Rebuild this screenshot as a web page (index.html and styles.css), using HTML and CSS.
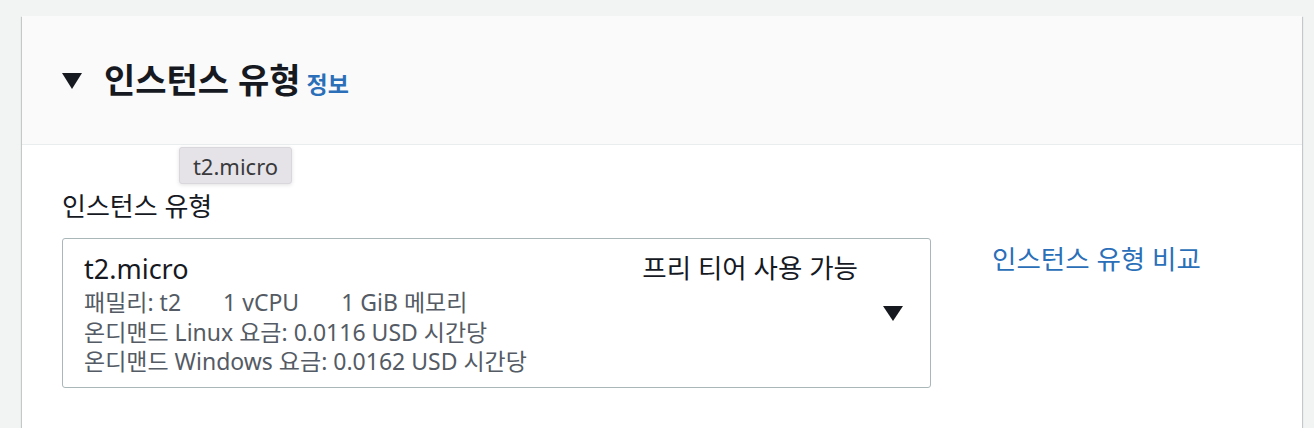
FILE: index.html
```html
<!DOCTYPE html>
<html lang="ko">
<head>
<meta charset="utf-8">
<title>인스턴스 유형</title>
<link rel="stylesheet" href="styles.css">
</head>
<body>
<div class="card">
  <div class="card-header">
    <svg class="caret" width="20" height="16" viewBox="0 0 20 16"><path d="M0 0H20L10 16Z" fill="#16191f"/></svg>
    <h2 class="title">인스턴스 유형</h2>
    <a class="info">정보</a>
  </div>
  <div class="card-body">
    <div class="tooltip">t2.micro</div>
    <div class="label">인스턴스 유형</div>
    <div class="row">
      <div class="select">
        <div class="select-main">
          <div class="opt-title">t2.micro</div>
          <div class="opt-desc">패밀리: t2<span class="sp"></span>1 vCPU<span class="sp"></span>1 GiB 메모리</div>
          <div class="opt-desc">온디맨드 Linux 요금: 0.0116 USD 시간당</div>
          <div class="opt-desc">온디맨드 Windows 요금: 0.0162 USD 시간당</div>
        </div>
        <div class="select-tag">프리 티어 사용 가능</div>
        <svg class="select-caret" width="20" height="15" viewBox="0 0 20 15"><path d="M0 0H20L10 15Z" fill="#16191f"/></svg>
      </div>
      <a class="compare">인스턴스 유형 비교</a>
    </div>
  </div>
</div>
</body>
</html>
```
FILE: styles.css
```css
html, body {
  margin: 0;
  padding: 0;
}
body {
  background: #f2f3f3;
  font-family: "Noto Sans", "Noto Sans CJK KR", sans-serif;
  color: #16191f;
  height: 428px;
  overflow: hidden;
}
.card {
  margin: 16px 0 0 22px;
  width: 1280px;
  height: 412px;
  background: #fff;
  box-shadow: 0 1px 1px 0 rgba(0, 28, 36, 0.3), 1px 1px 1px 0 rgba(0, 28, 36, 0.15), -1px 1px 1px 0 rgba(0, 28, 36, 0.15);
}
.card-header {
  height: 129px;
  box-sizing: border-box;
  background: #fafafa;
  border-bottom: 1px solid #eaeded;
  display: flex;
  align-items: center;
  padding: 0 40px;
}
.caret {
  flex: none;
  margin-right: 22px;
  margin-top: 1px;
}
.title {
  margin: 0;
  font-size: 34px;
  font-weight: 700;
  line-height: 44px;
}
.info {
  margin-left: 6px;
  margin-top: 6px;
  font-size: 23px;
  font-weight: 700;
  color: #2b6fb9;
}
.card-body {
  position: relative;
  padding: 44px 40px 0;
}
.tooltip {
  position: absolute;
  left: 157px;
  top: 2px;
  width: 113px;
  height: 37px;
  box-sizing: border-box;
  background: #e5e3e8;
  border: 1px solid #d9d7dc;
  border-radius: 3px;
  box-shadow: 0 1px 4px rgba(0, 0, 0, 0.12);
  font-size: 22px;
  color: #3a3a3c;
  display: flex;
  align-items: center;
  justify-content: center;
}
.label {
  font-size: 26px;
  line-height: 34px;
}
.row {
  margin-top: 15px;
  display: flex;
  align-items: flex-start;
}
.select {
  width: 869px;
  height: 150px;
  box-sizing: border-box;
  border: 1px solid #aab7b8;
  border-radius: 3px;
  display: flex;
  padding: 11px 27px 0 21px;
}
.select-main {
  flex: 1;
}
.opt-title {
  font-size: 27px;
  line-height: 38px;
}
.opt-desc {
  font-size: 23px;
  line-height: 29.5px;
  color: #545b64;
}
.sp {
  display: inline-block;
  width: 42px;
}
.select-tag {
  font-size: 26.5px;
  line-height: 36px;
  margin-right: 25px;
}
.select-caret {
  flex: none;
  margin-top: 56px;
}
.compare {
  margin-left: 61px;
  margin-top: 4px;
  font-size: 26.5px;
  line-height: 34px;
  color: #2b6fb9;
}
```
